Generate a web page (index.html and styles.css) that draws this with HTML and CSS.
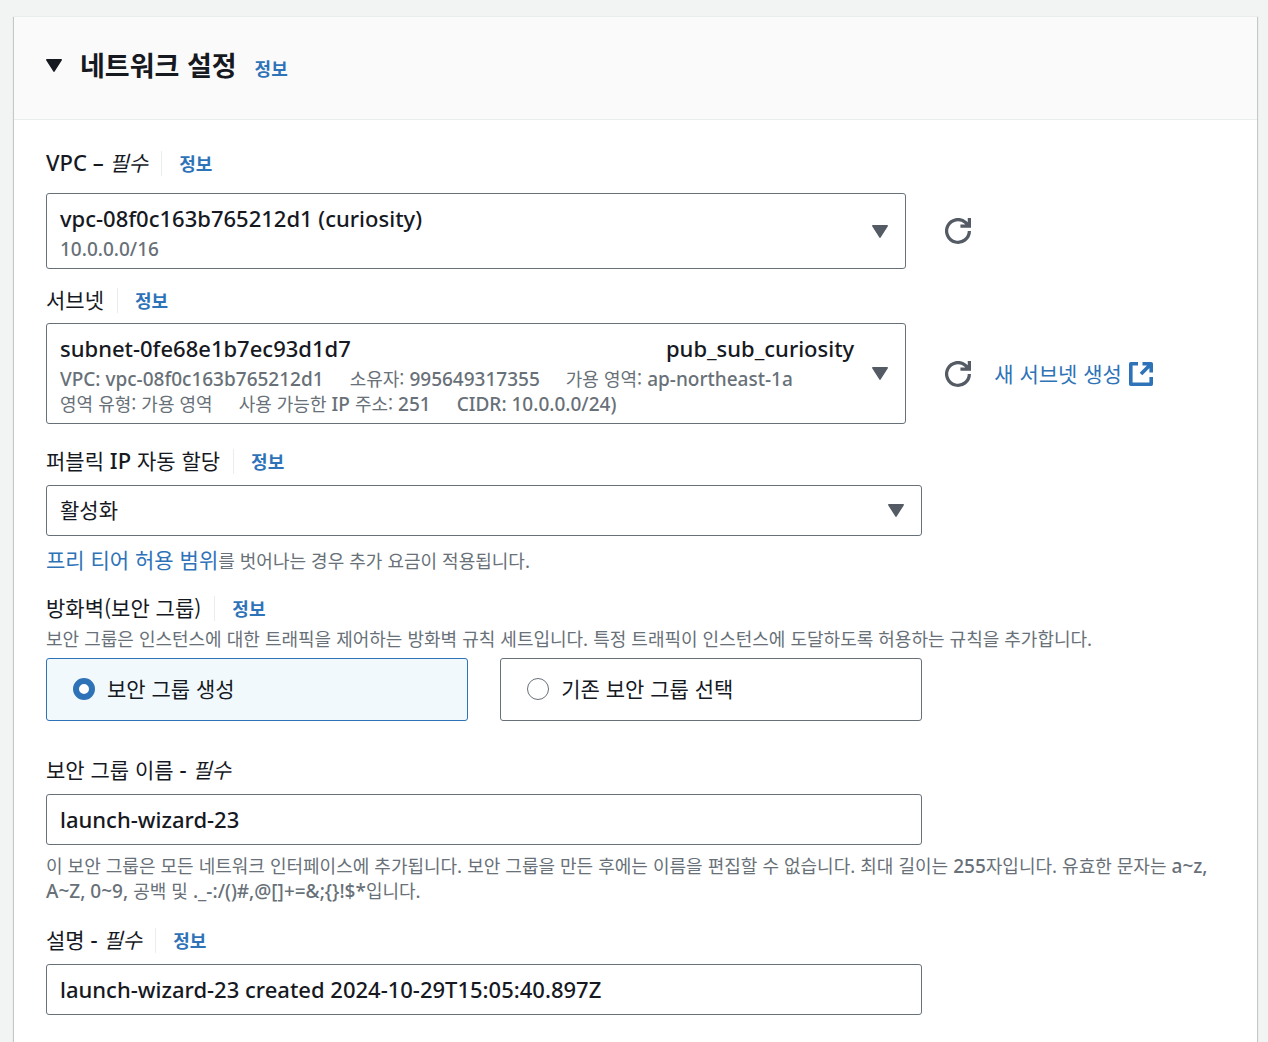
FILE: index.html
```html
<!DOCTYPE html>
<html lang="ko">
    <head>
        <meta charset="UTF-8" />
        <meta name="viewport" content="width=device-width, initial-scale=1.0" />
        <title>네트워크 설정</title>
        <link rel="stylesheet" href="styles.css">
    </head>
    <body>
        <section class="card">
            <header class="card-header">
                <button type="button" class="toggle" aria-expanded="true" aria-controls="networkSettings" aria-labelledby="cardTitle">
                    <svg class="caret" viewBox="0 0 16 13" aria-hidden="true"><path d="M.8.8h14.4L8 12.200z" /></svg>
                </button>
                <h2 id="cardTitle">네트워크 설정</h2>
                <a class="info" href="#">정보</a>
            </header>

            <form class="card-body" id="networkSettings">
                <!-- VPC -->
                <div class="field field-vpc">
                    <div class="label-row">
                        <label for="vpc"><span class="latin">VPC –</span> <em>필수</em></label>
                        <a class="info info-divided" href="#">정보</a>
                    </div>
                    <div class="control-row">
                        <button type="button" id="vpc" class="picker" aria-haspopup="listbox">
                            <span class="picker-content">
                                <span class="picker-title">vpc-08f0c163b765212d1 (curiosity)</span>
                                <span class="picker-details">
                                    <span><span class="latin">10.0.0.0/16</span></span>
                                </span>
                            </span>
                            <svg class="caret" viewBox="0 0 16 13" aria-hidden="true"><path d="M.8.8h14.4L8 12.200z" /></svg>
                        </button>
                        <button type="button" class="refresh" aria-label="VPC 새로 고침">
                            <svg viewBox="0 0 16 16" aria-hidden="true"><path d="M15 8a7 7 0 1 1-2.500-5.400L15 5M15 0v5H9.500" /></svg>
                        </button>
                    </div>
                </div>

                <!-- Subnet -->
                <div class="field">
                    <div class="label-row">
                        <label for="subnet">서브넷</label>
                        <a class="info info-divided" href="#">정보</a>
                    </div>
                    <div class="control-row">
                        <button type="button" id="subnet" class="picker" aria-haspopup="listbox">
                            <span class="picker-content">
                                <span class="picker-title">
                                    <span>subnet-0fe68e1b7ec93d1d7</span>
                                    <span>pub_sub_curiosity</span>
                                </span>
                                <span class="picker-details">
                                    <span><span class="latin">VPC: vpc-08f0c163b765212d1</span></span>
                                    <span>소유자: <span class="latin">995649317355</span></span>
                                    <span>가용 영역: <span class="latin">ap-northeast-1a</span></span>
                                    <span>영역 유형: 가용 영역</span>
                                    <span>사용 가능한 <span class="latin">IP</span> 주소: <span class="latin">251</span></span>
                                    <span><span class="latin">CIDR: 10.0.0.0/24)</span></span>
                                </span>
                            </span>
                            <svg class="caret" viewBox="0 0 16 13" aria-hidden="true"><path d="M.8.8h14.4L8 12.200z" /></svg>
                        </button>
                        <button type="button" class="refresh" aria-label="서브넷 새로 고침">
                            <svg viewBox="0 0 16 16" aria-hidden="true"><path d="M15 8a7 7 0 1 1-2.500-5.400L15 5M15 0v5H9.500" /></svg>
                        </button>
                        <a class="external" href="#">
                            새 서브넷 생성
                            <svg viewBox="0 0 16 16" aria-hidden="true"><path d="M6 1.200H1.200v13.600h13.600V10M9 1.200h5.800V7M14.800 1.200L8 8" /></svg>
                        </a>
                    </div>
                </div>

                <!-- Public IP -->
                <div class="field field-ip">
                    <div class="label-row">
                        <label for="publicIp">퍼블릭 <span class="latin">IP</span> 자동 할당</label>
                        <a class="info info-divided" href="#">정보</a>
                    </div>
                    <div class="select-wrap">
                        <select id="publicIp" class="text-control">
                            <option selected>활성화</option>
                            <option>비활성화</option>
                        </select>
                        <svg class="caret" viewBox="0 0 16 13" aria-hidden="true"><path d="M.8.8h14.4L8 12.200z" /></svg>
                    </div>
                    <p class="hint"><a href="#">프리 티어 허용 범위</a>를 벗어나는 경우 추가 요금이 적용됩니다.</p>
                </div>

                <!-- Firewall -->
                <fieldset class="field field-firewall">
                    <legend class="label-row">
                        <span>방화벽(보안 그룹)</span>
                        <a class="info info-divided" href="#">정보</a>
                    </legend>
                    <p class="description">보안 그룹은 인스턴스에 대한 트래픽을 제어하는 방화벽 규칙 세트입니다. 특정 트래픽이 인스턴스에 도달하도록 허용하는 규칙을 추가합니다.</p>
                    <div class="tiles">
                        <label class="tile"><input type="radio" name="securityGroup" checked />보안 그룹 생성</label>
                        <label class="tile"><input type="radio" name="securityGroup" />기존 보안 그룹 선택</label>
                    </div>
                </fieldset>

                <!-- Security group name -->
                <div class="field">
                    <div class="label-row">
                        <label for="groupName">보안 그룹 이름 <span class="latin">-</span> <em>필수</em></label>
                    </div>
                    <input type="text" id="groupName" class="text-control" value="launch-wizard-23" />
                    <p class="hint">이 보안 그룹은 모든 네트워크 인터페이스에 추가됩니다. 보안 그룹을 만든 후에는 이름을 편집할 수 없습니다. 최대 길이는 <span class="latin">255</span>자입니다. 유효한 문자는 <span class="latin">a~z, A~Z, 0~9,</span> 공백 및 <span class="latin">._-:/()#,@[]+=&amp;;{}!$*</span>입니다.</p>
                </div>

                <!-- Description -->
                <div class="field">
                    <div class="label-row">
                        <label for="groupDescription">설명 <span class="latin">-</span> <em>필수</em></label>
                        <a class="info info-divided" href="#">정보</a>
                    </div>
                    <input type="text" id="groupDescription" class="text-control" value="launch-wizard-23 created 2024-10-29T15:05:40.897Z" />
                </div>
            </form>
        </section>
    </body>
</html>
```
FILE: styles.css
```css
* {
    box-sizing: border-box;
}
body {
    margin: 0;
    padding: 16px 11px 0 14px;
    background-color: #f2f3f3;
    color: #16191f;
    font-family: "Noto Sans CJK KR", sans-serif;
    font-size: 21px;
    line-height: 25px;
}
button,
input,
select {
    margin: 0;
    color: inherit;
    font: inherit;
}
button {
    padding: 0;
    border: none;
    background: none;
    text-align: left;
    cursor: pointer;
}
a {
    color: #2e73b8;
    text-decoration: none;
}
a:hover {
    text-decoration: underline;
}
.latin {
    font-family: "Noto Sans", sans-serif;
    font-size: 22px;
    font-weight: 500;
    line-height: 16px;
}

/* Card */
.card {
    border-top: 1px solid #eaeded;
    background-color: #fff;
    box-shadow: 0 1px 1px rgba(0, 28, 36, 0.3), 1px 1px 1px rgba(0, 28, 36, 0.15), -1px 1px 1px rgba(0, 28, 36, 0.15);
}
.card-header {
    display: flex;
    align-items: baseline;
    padding: 30px 32px 36px;
    border-bottom: 1px solid #eaeded;
    background-color: #fafafa;
}
.card-header h2 {
    margin: 0 18px;
    font-size: 27px;
    line-height: 36px;
}
.card-body {
    padding: 31px 32px 32px;
}
.caret {
    flex: none;
    width: 16px;
    height: 13px;
    fill: #545b64;
    stroke: #545b64;
    stroke-width: 1.5;
    stroke-linejoin: round;
}
.toggle {
    display: flex;
    align-self: center;
}
.toggle .caret {
    fill: #16191f;
    stroke: #16191f;
}

/* Labels */
.field {
    margin: 0 0 25px;
    padding: 0;
    border: none;
}
.label-row {
    display: flex;
    align-items: center;
    margin-bottom: 11px;
    padding: 0;
}
.label-row > * {
    padding-bottom: 2px;
    line-height: 23px;
}
.info {
    font-size: 18px;
    font-weight: bold;
}
.label-row .info-divided {
    margin-left: 13px;
    padding: 0 0 0 17px;
    border-left: 1px solid #eaeded;
    line-height: 25px;
}
.field-vpc {
    margin-bottom: 19px;
}
.field-vpc .label-row {
    margin-bottom: 17px;
}
.field-vpc + .field .label-row {
    margin-bottom: 10px;
}
.field-ip {
    margin-bottom: 23px;
}
.field-firewall {
    margin-bottom: 37px;
}
.field-firewall .label-row {
    margin-bottom: 5px;
}

/* Pickers */
.control-row {
    display: flex;
    align-items: center;
}
.picker {
    display: flex;
    align-items: center;
    gap: 18px;
    width: calc(75% - 24px);
    padding: 0 17px 0 13px;
    border: 1px solid #687078;
    border-radius: 3px;
}
.picker-content {
    flex: 1;
    min-width: 0;
    padding: 12px 0 7px;
}
.picker-title {
    display: flex;
    justify-content: space-between;
    margin-bottom: 5px;
    font-family: "Noto Sans", "Noto Sans CJK KR", sans-serif;
    font-size: 22px;
    font-weight: 500;
}
.picker-details {
    display: flex;
    flex-wrap: wrap;
    column-gap: 26px;
    color: #687078;
    font-size: 18px;
}
.picker-details .latin,
.hint .latin {
    font-size: 19px;
}
.refresh {
    margin: 0 23px 0 39px;
}
.refresh svg {
    display: block;
    width: 26px;
    height: 26px;
    fill: none;
    stroke: #545b64;
    stroke-width: 2;
}
.external {
    display: flex;
    align-items: center;
    gap: 7px;
}
.external svg {
    width: 24px;
    height: 24px;
    fill: none;
    stroke: #2e73b8;
    stroke-width: 2.4;
    stroke-linejoin: round;
}

/* Text boxes and select */
.text-control {
    display: block;
    width: calc(75% - 8px);
    height: 51px;
    padding: 0 13px 2px;
    border: 1px solid #687078;
    border-radius: 3px;
    background-color: #fff;
}
input.text-control {
    font-family: "Noto Sans", "Noto Sans CJK KR", sans-serif;
    font-size: 22px;
    font-weight: 500;
}
.select-wrap {
    position: relative;
    width: calc(75% - 8px);
}
.select-wrap .text-control {
    width: 100%;
    appearance: none;
}
.select-wrap .caret {
    position: absolute;
    top: 19px;
    right: 18px;
    pointer-events: none;
}
.hint {
    margin: 8px 0 0;
    color: #687078;
    font-size: 18px;
}
.field-ip .hint {
    margin-top: 12px;
}
.hint a {
    font-size: 21px;
    line-height: 20px;
}

/* Radio tiles */
.description {
    margin: 0 0 7px;
    color: #687078;
    font-size: 18px;
}
.tiles {
    display: grid;
    grid-template-columns: 1fr 1fr;
    gap: 32px;
    width: calc(75% - 8px);
}
.tile {
    display: flex;
    align-items: center;
    gap: 12px;
    padding: 17px 26px 19px;
    border: 1px solid #687078;
    border-radius: 3px;
    cursor: pointer;
}
.tile:has(input:checked) {
    border-color: #2e73b8;
    background-color: #f2f9fd;
}
.tile input {
    width: 22px;
    height: 22px;
    border: 1px solid #687078;
    border-radius: 50%;
    background-color: #fff;
    appearance: none;
}
.tile input:checked {
    border: 6px solid #2e73b8;
}
```
